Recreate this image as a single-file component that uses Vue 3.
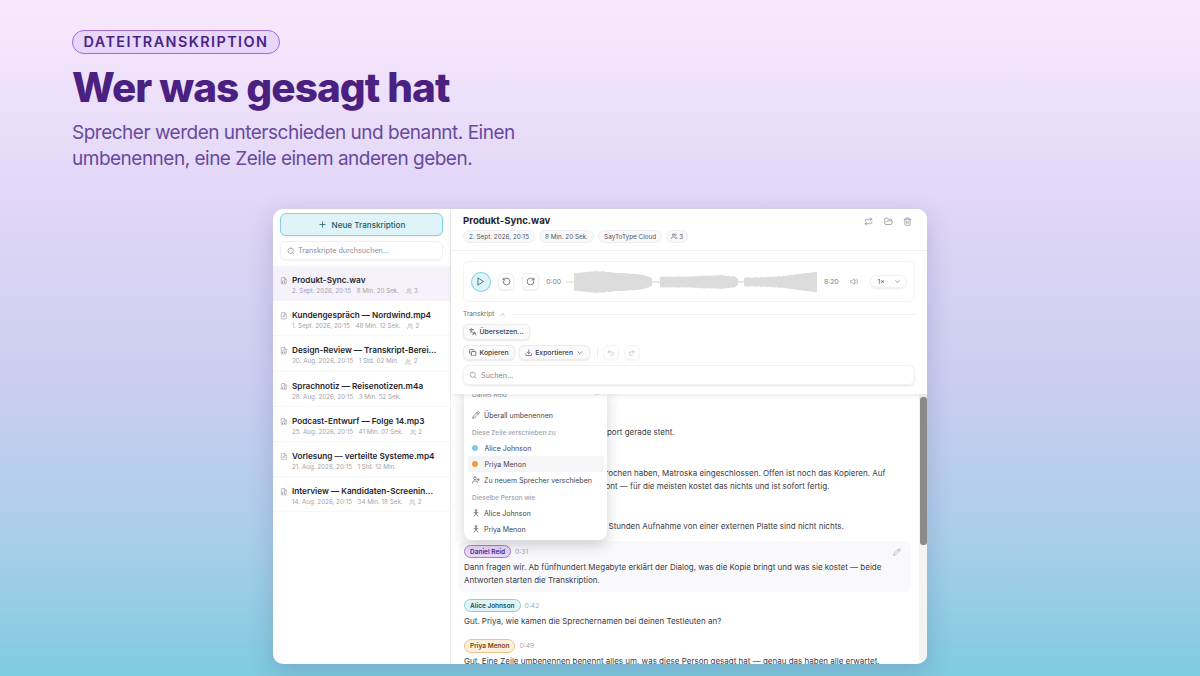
<script setup>
import { h } from 'vue'

const icons = {
  plus: ['M5 12h14', 'M12 5v14'],
  search: ['M11 3a8 8 0 1 0 0 16a8 8 0 1 0 0-16', 'M21 21l-4.3-4.3'],
  fileAudio: ['M14 2H6a2 2 0 0 0-2 2v16a2 2 0 0 0 2 2h12a2 2 0 0 0 2-2V8z', 'M14 2v6h6', 'M8 18v-3a4 4 0 0 1 8 0v3', 'M8 16h1v2H8z', 'M15 16h1v2h-1z'],
  fileVideo: ['M14 2H6a2 2 0 0 0-2 2v16a2 2 0 0 0 2 2h12a2 2 0 0 0 2-2V8z', 'M14 2v6h6', 'M10 11.5v5l4-2.5z'],
  users: ['M16 21v-2a4 4 0 0 0-4-4H6a4 4 0 0 0-4 4v2', 'M9 3a4 4 0 1 0 0 8a4 4 0 1 0 0-8', 'M22 21v-2a4 4 0 0 0-3-3.87', 'M16 3.13a4 4 0 0 1 0 7.75'],
  repeat: ['M17 2l4 4l-4 4', 'M3 11v-1a4 4 0 0 1 4-4h14', 'M7 22l-4-4l4-4', 'M21 13v1a4 4 0 0 1-4 4H3'],
  folder: ['M6 14l1.5-2.9A2 2 0 0 1 9.24 10H20a2 2 0 0 1 1.94 2.5l-1.54 6a2 2 0 0 1-1.95 1.5H4a2 2 0 0 1-2-2V5a2 2 0 0 1 2-2h3.9a2 2 0 0 1 1.69.9l.81 1.2a2 2 0 0 0 1.67.9H18a2 2 0 0 1 2 2v2'],
  trash: ['M3 6h18', 'M19 6v14a2 2 0 0 1-2 2H7a2 2 0 0 1-2-2V6', 'M8 6V4a2 2 0 0 1 2-2h4a2 2 0 0 1 2 2v2', 'M10 11v6', 'M14 11v6'],
  play: ['M6 3l14 9l-14 9z'],
  ccw: ['M3 12a9 9 0 1 0 9-9a9.75 9.75 0 0 0-6.74 2.74L3 8', 'M3 3v5h5'],
  cw: ['M21 12a9 9 0 1 1-9-9c2.52 0 4.93 1 6.74 2.74L21 8', 'M21 3v5h-5'],
  volume: ['M11 5L6 9H2v6h4l5 4z', 'M15.5 8.5a5 5 0 0 1 0 7', 'M19 5a10 10 0 0 1 0 14'],
  down: ['M6 9l6 6l6-6'],
  up: ['M18 15l-6-6l-6 6'],
  lang: ['M5 8l6 6', 'M4 14l6-6l2-3', 'M2 5h12', 'M7 2h1', 'M22 22l-5-10l-5 10', 'M14 18h6'],
  copy: ['M10 8h10a2 2 0 0 1 2 2v10a2 2 0 0 1-2 2H10a2 2 0 0 1-2-2V10a2 2 0 0 1 2-2', 'M4 16c-1.1 0-2-.9-2-2V4c0-1.1.9-2 2-2h10c1.1 0 2 .9 2 2'],
  download: ['M21 15v4a2 2 0 0 1-2 2H5a2 2 0 0 1-2-2v-4', 'M7 10l5 5l5-5', 'M12 15V3'],
  undo: ['M9 14L4 9l5-5', 'M4 9h10.5a5.5 5.5 0 0 1 0 11H11'],
  redo: ['M15 14l5-5l-5-5', 'M20 9H9.5a5.5 5.5 0 0 0 0 11H13'],
  pencil: ['M17 3a2.85 2.83 0 1 1 4 4L7.5 20.5L2 22l1.5-5.5z', 'M15 5l4 4'],
  userPlus: ['M16 21v-2a4 4 0 0 0-4-4H6a4 4 0 0 0-4 4v2', 'M9 3a4 4 0 1 0 0 8a4 4 0 1 0 0-8', 'M19 8v6', 'M22 11h-6'],
  merge: ['M12 2a2.5 2.5 0 1 0 0 5a2.5 2.5 0 1 0 0-5', 'M12 7v7', 'M12 14l-6 8', 'M12 14l6 8', 'M6 11h12'],
}

const Ic = (props) =>
  h(
    'svg',
    { viewBox: '0 0 24 24', fill: 'none', stroke: 'currentColor', 'stroke-width': props.w || 2, 'stroke-linecap': 'round', 'stroke-linejoin': 'round' },
    icons[props.n].map((d) => h('path', { d })),
  )
Ic.props = ['n', 'w']

const files = [
  { name: 'Produkt-Sync.wav', date: '2. Sept. 2026, 20:15', dur: '8 Min. 20 Sek.', n: 3, icon: 'fileAudio', active: true },
  { name: 'Kundengespräch — Nordwind.mp4', date: '1. Sept. 2026, 20:15', dur: '48 Min. 12 Sek.', n: 2, icon: 'fileVideo' },
  { name: 'Design-Review — Transkript-Bereich.wav', date: '30. Aug. 2026, 20:15', dur: '1 Std. 02 Min.', n: 2, icon: 'fileAudio' },
  { name: 'Sprachnotiz — Reisenotizen.m4a', date: '28. Aug. 2026, 20:15', dur: '3 Min. 52 Sek.', icon: 'fileAudio' },
  { name: 'Podcast-Entwurf — Folge 14.mp3', date: '25. Aug. 2026, 20:15', dur: '41 Min. 07 Sek.', n: 2, icon: 'fileAudio' },
  { name: 'Vorlesung — verteilte Systeme.mp4', date: '21. Aug. 2026, 20:15', dur: '1 Std. 12 Min.', icon: 'fileVideo' },
  { name: 'Interview — Kandidaten-Screening.wav', date: '14. Aug. 2026, 20:15', dur: '34 Min. 18 Sek.', n: 2, icon: 'fileAudio' },
]

const chips = ['2. Sept. 2026, 20:15', '8 Min. 20 Sek.', 'SayToType Cloud']

const rows = [
  { who: 'alice', name: 'Alice Johnson', t: '0:04', text: 'Alice, sag uns schnell, wo der Dateiimport gerade steht.' },
  { who: 'alice', name: 'Alice Johnson', t: '0:11', text: "Alle Formate sind drin, wie wir's besprochen haben, Matroska eingeschlossen. Offen ist noch das Kopieren. Auf Wunsch bleibt alles vor Ort, ohne Ballont — für die meisten kostet das nichts und ist sofort fertig." },
  { who: 'priya', name: 'Priya Menon', t: '0:24', text: 'Kommt darauf an: Diese vielen, vielen Stunden Aufnahme von einer externen Platte sind nicht nichts.' },
  { who: 'daniel', name: 'Daniel Reid', t: '0:31', hover: true, text: 'Dann fragen wir. Ab fünfhundert Megabyte erklärt der Dialog, was die Kopie bringt und was sie kostet — beide Antworten starten die Transkription.' },
  { who: 'alice', name: 'Alice Johnson', t: '0:42', text: 'Gut. Priya, wie kamen die Sprechernamen bei deinen Testleuten an?' },
  { who: 'priya', name: 'Priya Menon', t: '0:49', text: 'Gut. Eine Zeile umbenennen benennt alles um, was diese Person gesagt hat — genau das haben alle erwartet.' },
]

// Waveform silhouette: [x, half-height] key points along the 251px track
const env = [
  [7, 0.6], [8, 8.5], [20, 9.5], [31, 10.5], [50, 9], [65, 8], [78, 6.5], [85, 3.5], [86, 0.7], [93, 0.7], [94, 4.8],
  [120, 5], [140, 6], [155, 6.5], [168, 5], [171, 3.5], [172, 0.7], [177, 0.7], [178, 4], [200, 4.5], [215, 5.5], [232, 7.5], [250, 10],
]
function halfAt(x) {
  for (let i = 1; i < env.length; i++) {
    if (x <= env[i][0]) {
      const [a, b] = [env[i - 1], env[i]]
      return b[1] === a[1] ? a[1] : a[1] + ((b[1] - a[1]) * (x - a[0])) / (b[0] - a[0])
    }
  }
  return 0.7
}
const bars = []
for (let x = 0; x <= 250; x++) {
  const base = x < 7 ? 0.6 : halfAt(x)
  const jitter = base > 1 ? Math.abs((Math.sin(x * 12.9898) * 43758.5453) % 1) * 0.7 : 0
  bars.push(`M${x + 0.5} ${(12 - base - jitter).toFixed(2)}V${(12 + base + jitter).toFixed(2)}`)
}
const wavePath = bars.join('')
</script>

<template>
  <div class="page">
    <header class="hero">
      <span class="eyebrow">DATEITRANSKRIPTION</span>
      <h1>Wer was gesagt hat</h1>
      <p>Sprecher werden unterschieden und benannt. Einen<br />umbenennen, eine Zeile einem anderen geben.</p>
    </header>

    <div class="window">
      <aside class="sidebar">
        <div class="side-top">
          <button class="new-btn"><Ic n="plus" class="ic-new" />Neue Transkription</button>
          <div class="side-search"><Ic n="search" class="ic-s" />Transkripte durchsuchen...</div>
        </div>
        <ul class="files">
          <li v-for="f in files" :key="f.name" class="file" :class="{ active: f.active }">
            <Ic :n="f.icon" class="ic-file" />
            <div class="file-body">
              <div class="file-name">{{ f.name }}</div>
              <div class="file-meta">
                <span>{{ f.date }}</span><span>{{ f.dur }}</span>
                <span v-if="f.n" class="file-n"><Ic n="users" class="ic-u" />{{ f.n }}</span>
              </div>
            </div>
          </li>
        </ul>
      </aside>

      <main class="main">
        <div class="panel">
          <div class="doc-head">
            <div class="doc-info">
              <div class="doc-title">Produkt-Sync.wav</div>
              <div class="chips">
                <span v-for="c in chips" :key="c" class="chip">{{ c }}</span>
                <span class="chip chip-n"><Ic n="users" class="ic-u2" />3</span>
              </div>
            </div>
            <div class="doc-actions">
              <Ic n="repeat" class="ic-a" /><Ic n="folder" class="ic-a" /><Ic n="trash" class="ic-a" />
            </div>
          </div>

          <div class="panel-body">
            <div class="player">
              <span class="play"><Ic n="play" class="ic-play" /></span>
              <span class="skip"><Ic n="ccw" class="ic-skip" /></span>
              <span class="skip"><Ic n="cw" class="ic-skip" /></span>
              <span class="time">0:00</span>
              <svg class="wave" viewBox="0 0 251 24"><path :d="wavePath" stroke="#dcdcdd" stroke-width="1" fill="none" /></svg>
              <span class="time">8:20</span>
              <Ic n="volume" class="ic-vol" />
              <span class="speed">1×<Ic n="down" class="ic-chev" /></span>
            </div>

            <div class="tr-head">
              <span>Transkript</span><Ic n="up" class="ic-up" /><i class="tr-line"></i>
            </div>
            <div class="btn-row"><button class="btn"><Ic n="lang" class="ic-b" />Übersetzen...</button></div>
            <div class="btn-row">
              <button class="btn"><Ic n="copy" class="ic-b" />Kopieren</button>
              <button class="btn"><Ic n="download" class="ic-b" />Exportieren<Ic n="down" class="ic-b" /></button>
              <i class="vsep"></i>
              <button class="btn ghost"><Ic n="undo" class="ic-b" /></button>
              <button class="btn ghost"><Ic n="redo" class="ic-b" /></button>
            </div>
            <div class="tr-search"><Ic n="search" class="ic-s2" />Suchen...</div>
          </div>
        </div>

        <div class="scroll">
          <div class="rows">
            <div v-for="r in rows" :key="r.t" class="row" :class="{ hover: r.hover }">
              <div class="row-head">
                <span class="badge" :class="r.who">{{ r.name }}</span>
                <span class="stamp">{{ r.t }}</span>
                <Ic v-if="r.hover" n="pencil" class="ic-pen" />
              </div>
              <p class="row-text">{{ r.text }}</p>
            </div>
          </div>
          <div class="scrollbar"><i class="thumb"></i></div>

          <div class="menu">
            <div class="m-top"><span>Daniel Reid</span><Ic n="up" class="ic-mup" /></div>
            <div class="m-item"><Ic n="pencil" class="ic-m" />Überall umbenennen</div>
            <div class="m-label">Diese Zeile verschieben zu</div>
            <div class="m-item dot-item"><i class="dot blue"></i>Alice Johnson</div>
            <div class="m-item dot-item sel"><i class="dot orange"></i>Priya Menon</div>
            <div class="m-item"><Ic n="userPlus" class="ic-m" />Zu neuem Sprecher verschieben</div>
            <div class="m-label">Dieselbe Person wie</div>
            <div class="m-item"><Ic n="merge" class="ic-m" />Alice Johnson</div>
            <div class="m-item"><Ic n="merge" class="ic-m" />Priya Menon</div>
          </div>
        </div>
      </main>
    </div>
  </div>
</template>

<style>
html, body { margin: 0; padding: 0; }
</style>

<style scoped>
* { box-sizing: border-box; }
.page {
  width: 1200px; height: 676px; overflow: hidden;
  display: flex; flex-direction: column;
  font-family: Inter, "Noto Sans", sans-serif;
  background: linear-gradient(180deg, #f9e9fe 0%, #e0d6f6 30%, #c9cdf0 58%, #a9cee8 80%, #7fcbdf 100%);
}
.hero { padding: 30px 0 0 72px; height: 209px; flex: none; }
.eyebrow {
  display: inline-block; height: 24px; line-height: 22px; padding: 0 10.5px;
  border: 1px solid #9a6ddd; border-radius: 12px; background: #e8d6fb;
  color: #4a2483; font-size: 14.4px; font-weight: 600; letter-spacing: 1.43px;
}
h1 { margin: 6px 0 0; font-size: 40.5px; line-height: 56px; font-weight: 800; letter-spacing: -0.93px; color: #4a2180; }
.hero p { margin: 4px 0 0; font-size: 19px; line-height: 26px; color: #674a9e; letter-spacing: -0.5px; }

.window {
  width: 654px; height: 455px; margin: 0 auto; flex: none;
  display: flex; overflow: hidden; background: #fff; border-radius: 10px;
  box-shadow: 0 8px 24px rgba(70, 60, 130, .22);
}
.sidebar { width: 178px; flex: none; border-right: 1px solid #eeeef1; display: flex; flex-direction: column; }
.side-top { padding: 4px 7px 0; }
.new-btn {
  width: 100%; height: 23px; border: 1px solid #80d2dd; border-radius: 6px; background: #def4f8;
  color: #1e5a66; font: 500 8.1px Inter, sans-serif;
  display: flex; align-items: center; justify-content: center; gap: 5px;
  box-shadow: 0 1px 2px rgba(0, 0, 0, .06);
}
.ic-new { width: 9px; height: 9px; }
.side-search {
  height: 19px; margin-top: 5px; padding-left: 6px; border: 1px solid #f0f0f3; border-radius: 6px;
  display: flex; align-items: center; gap: 3px; font-size: 7.2px; color: #8d8d97;
  box-shadow: 0 1px 2px rgba(0, 0, 0, .06);
}
.ic-s { width: 8px; height: 8px; color: #8d8d97; }
.files { list-style: none; margin: 6px 0 0; padding: 0; }
.file {
  height: 35.2px; padding: 9px 12px 0 7px; display: flex; gap: 4.5px;
  border-bottom: 1px solid #f7f7f9;
}
.file.active { background: #f6f2fb; border-bottom-color: transparent; }
.ic-file { width: 7.5px; height: 7.5px; flex: none; margin-top: 2px; color: #9a9aa2; }
.file-body { min-width: 0; flex: 1; }
.file-name { font-size: 8.2px; line-height: 11px; font-weight: 600; color: #26262e; white-space: nowrap; overflow: hidden; text-overflow: ellipsis; }
.file-meta { display: flex; gap: 5.5px; font-size: 6.25px; line-height: 11px; color: #a3a3aa; white-space: nowrap; }
.file-n { display: inline-flex; align-items: center; gap: 2px; margin-left: 1px; }
.ic-u { width: 6.5px; height: 6.5px; }

.main { flex: 1; min-width: 0; display: flex; flex-direction: column; position: relative; }
.panel { position: relative; z-index: 3; background: #fff; box-shadow: 0 2px 5px rgba(0, 0, 0, .08); height: 185px; flex: none; }
.doc-head { height: 42px; padding: 5px 15px 0 12px; border-bottom: 1px solid #f0f0f3; display: flex; justify-content: space-between; }
.doc-title { font-size: 9.6px; line-height: 13px; font-weight: 700; color: #26262e; }
.chips { display: flex; gap: 4px; margin-top: 3px; }
.chip {
  height: 13px; padding: 0 5px; border: 1px solid #eeeef1; border-radius: 7px; background: #f8f8fa;
  display: inline-flex; align-items: center; gap: 2px; font-size: 6.35px; color: #55555f; white-space: nowrap;
}
.chip-n { padding: 0 4px; gap: 1.5px; }
.ic-u2 { width: 6.5px; height: 6.5px; }
.doc-actions { display: flex; gap: 10.5px; padding-top: 3px; }
.ic-a { width: 9px; height: 9px; color: #8f8f97; }

.panel-body { padding: 10px 12px 0; }
.player {
  height: 41px; padding: 0 7px; border: 1px solid #f3f3f5; border-radius: 6px;
  display: flex; align-items: center;
}
.play { width: 20px; height: 20px; border-radius: 50%; border: 1px solid #82d3de; background: #dff4f8; display: flex; align-items: center; justify-content: center; margin-right: 7px; color: #1e5a66; }
.ic-play { width: 9px; height: 9px; }
.skip { width: 17px; height: 17px; border-radius: 5px; border: 1px solid #efeff2; display: flex; align-items: center; justify-content: center; margin-right: 7.5px; color: #55555f; box-shadow: 0 1px 2px rgba(0, 0, 0, .07); }
.ic-skip { width: 9px; height: 9px; }
.time { font-size: 6.8px; color: #7b7b85; }
.wave { width: 251px; height: 24px; margin: 0 0 0 5px; flex: none; }
.wave + .time { margin-left: 7px; }
.ic-vol { width: 9px; height: 9px; margin-left: 11px; color: #a0a0a8; }
.speed { width: 37px; height: 13px; margin-left: 12px; padding: 0 5px 0 6px; border: 1px solid #f0f0f3; border-radius: 7px; display: flex; justify-content: space-between; align-items: center; font-size: 6.8px; color: #55555f; box-shadow: 0 1px 2px rgba(0, 0, 0, .08); }
.ic-chev { width: 7px; height: 7px; }

.tr-head { display: flex; align-items: center; height: 12px; margin-top: 6px; font-size: 6.6px; color: #6c6c76; }
.ic-up { width: 7px; height: 7px; margin-left: 5px; color: #8a8a92; }
.tr-line { flex: 1; height: 1px; background: #f0f0f3; margin-left: 6px; }
.btn-row { display: flex; align-items: center; gap: 4px; margin-top: 4px; }
.btn-row + .btn-row { margin-top: 5px; }
.btn {
  height: 15.5px; padding: 0 5px; border: 1px solid #ececef; border-radius: 5px; background: #fafafb;
  display: inline-flex; align-items: center; gap: 3px; font: 500 6.85px Inter, sans-serif; color: #3d3d47;
  box-shadow: 0 1px 2px rgba(0, 0, 0, .09);
}
.ic-b { width: 7.5px; height: 7.5px; }
.btn.ghost { width: 16px; justify-content: center; padding: 0; background: #fff; color: #b4b4ba; border-color: #f5f5f7; box-shadow: 0 1px 1px rgba(0, 0, 0, .03); margin-right: 1px; }
.vsep { width: 1px; height: 11px; background: #ededf0; margin: 0 1px 0 3px; }
.tr-search {
  height: 20px; margin-top: 5px; padding-left: 5px; border: 1px solid #f1f1f3; border-radius: 6px;
  display: flex; align-items: center; gap: 4px; font-size: 7.3px; color: #85858f;
  box-shadow: 0 1px 2px rgba(0, 0, 0, .1);
}
.ic-s2 { width: 8px; height: 8px; color: #8d8d97; }

.scroll { flex: 1; min-height: 0; position: relative; overflow: hidden; display: flex; }
.rows { flex: 1; min-width: 0; padding: 12px 8px 0 8px; }
.row { padding: 4.5px 5px 3.9px; margin-bottom: 2.8px; border-radius: 5px; }
.row.hover { background: #f9f9fb; }
.row-head { display: flex; align-items: center; height: 13.4px; gap: 4px; }
.badge { height: 13.4px; padding: 0 5px; border-radius: 7px; font-size: 6.5px; font-weight: 600; display: inline-flex; align-items: center; white-space: nowrap; border: 1px solid; }
.badge.daniel { background: #e9d9f8; border-color: #a57fd8; color: #53249a; }
.badge.alice { background: #e0f4f8; border-color: #86d2de; color: #17505f; }
.badge.priya { background: #fdf0dc; border-color: #eec28a; color: #7b4412; }
.stamp { font-size: 6.8px; color: #a9a9b1; }
.ic-pen { width: 8px; height: 8px; margin-left: auto; margin-right: 5px; color: #a0a0a8; }
.row-text { margin: 2.4px 0 0; font-size: 8px; line-height: 13.4px; color: #3b3b45; }
.scrollbar { width: 8px; flex: none; margin: 0 0 4px; background: #f3f3f4; padding-top: 3px; }
.thumb { display: block; height: 148px; width: 7px; margin: 0 auto; background: #8a8a8c; border-radius: 3px; }

.menu {
  position: absolute; left: 13px; top: -7px; width: 143px; height: 153px; padding: 0 3px 0 4px;
  background: #fff; border-radius: 8px; box-shadow: 0 5px 14px rgba(30, 30, 50, .2); z-index: 2;
}
.m-top { height: 20px; padding: 4px 4px 0 4px; display: flex; justify-content: space-between; font-size: 6.6px; color: #8a8a92; }
.ic-mup { width: 6px; height: 6px; }
.m-item { height: 16px; padding-left: 4px; display: flex; align-items: center; gap: 4px; font-size: 7px; color: #45454f; border-radius: 3px; }
.m-item.sel { background: #f5f5f7; }
.m-label { height: 14px; margin-top: 3px; padding: 3px 0 0 4px; font-size: 6.5px; font-weight: 500; color: #a0a0aa; }
.ic-m { width: 8px; height: 8px; color: #55555f; flex: none; }
.dot { width: 6px; height: 6px; border-radius: 50%; margin-right: 2.5px; }
.dot.blue { background: #7ccde4; }
.dot.orange { background: #ea9f40; }
</style>
